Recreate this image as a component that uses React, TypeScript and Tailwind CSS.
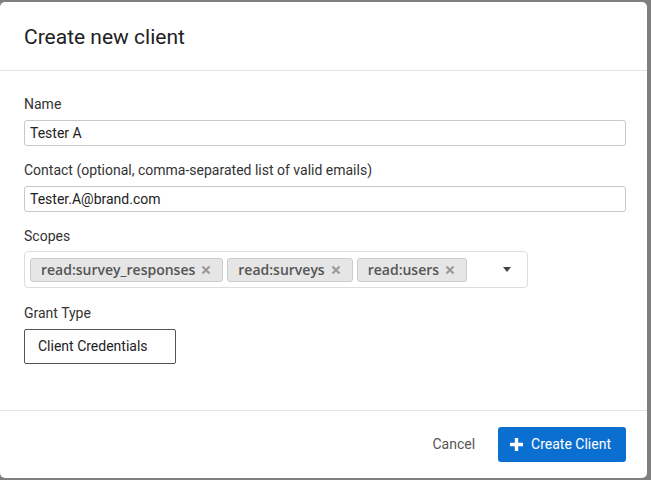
const scopes = ["read:survey_responses", "read:surveys", "read:users"];

function Field({ label, children }: { label: string; children: React.ReactNode }) {
  return (
    <div className="flex flex-col">
      <label className="h-5 text-[14px] leading-5 text-[#333]">{label}</label>
      {children}
    </div>
  );
}

function TextInput({ value }: { value: string }) {
  return (
    <div className="mt-[6px] flex h-[26px] items-center rounded-[3px] border border-[#c8c8c8] px-[5px] text-[14px] text-[#222]">
      {value}
    </div>
  );
}

export default function App() {
  return (
    <div className="h-[480px] w-[651px] bg-[#7f7f7f] pt-[2px] pr-[4px] pb-[2px] font-['Roboto',sans-serif]">
      <div className="flex h-full flex-col rounded-[5px] bg-white">
        <div className="flex h-[69px] items-center border-b border-[#e4e4e4] px-6 pt-1">
          <h1 className="text-[21px] font-normal text-[#222]">Create new client</h1>
        </div>

        <div className="flex flex-1 flex-col pl-6 pr-[21px] pt-[23px]">
          <Field label="Name">
            <TextInput value="Tester A" />
          </Field>
          <div className="mt-[14px]">
            <Field label="Contact (optional, comma-separated list of valid emails)">
              <TextInput value="Tester.A@brand.com" />
            </Field>
          </div>
          <div className="mt-[14px]">
            <Field label="Scopes">
              <div className="mt-[5px] flex h-[37px] w-[504px] items-center rounded-[4px] border border-[#ddd] pl-[5px] pr-4">
                <div className="flex flex-1 gap-[4px]">
                  {scopes.map((s) => (
                    <span
                      key={s}
                      className="flex h-[24px] items-center gap-[6px] rounded-[3px] border border-[#ccc] bg-[#e6e6e6] pl-[10px] pr-[11px] font-['Open_Sans',sans-serif] text-[14px] font-semibold text-[#555]"
                    >
                      {s}
                      <svg width="10" height="10" viewBox="0 0 10 10">
                        <path d="M1.5 1.5 8.5 8.5 M8.5 1.5 1.5 8.5" stroke="#9a9a9a" strokeWidth="2.2" />
                      </svg>
                    </span>
                  ))}
                </div>
                <svg width="8" height="5" viewBox="0 0 8 5">
                  <path d="M0 0h8L4 5z" fill="#444" />
                </svg>
              </div>
            </Field>
          </div>
          <div className="mt-[15px]">
            <Field label="Grant Type">
              <button className="mt-[6px] h-[35px] w-[152px] rounded-[2px] border border-[#555] pl-[13px] text-left text-[14px] text-[#222]">
                Client Credentials
              </button>
            </Field>
          </div>
        </div>

        <div className="flex h-[68px] items-center justify-end gap-[23px] border-t border-[#e4e4e4] pr-[21px]">
          <button className="text-[14px] text-[#555]">Cancel</button>
          <button className="flex h-[35px] items-center gap-[7px] rounded-[3px] bg-[#0b6fd1] pl-[11px] pr-[15px] text-[14px] text-white">
            <svg width="15" height="15" viewBox="0 0 15 15">
              <path d="M7.5 1v13M1 7.5h13" stroke="white" strokeWidth="3.4" />
            </svg>
            Create Client
          </button>
        </div>
      </div>
    </div>
  );
}
